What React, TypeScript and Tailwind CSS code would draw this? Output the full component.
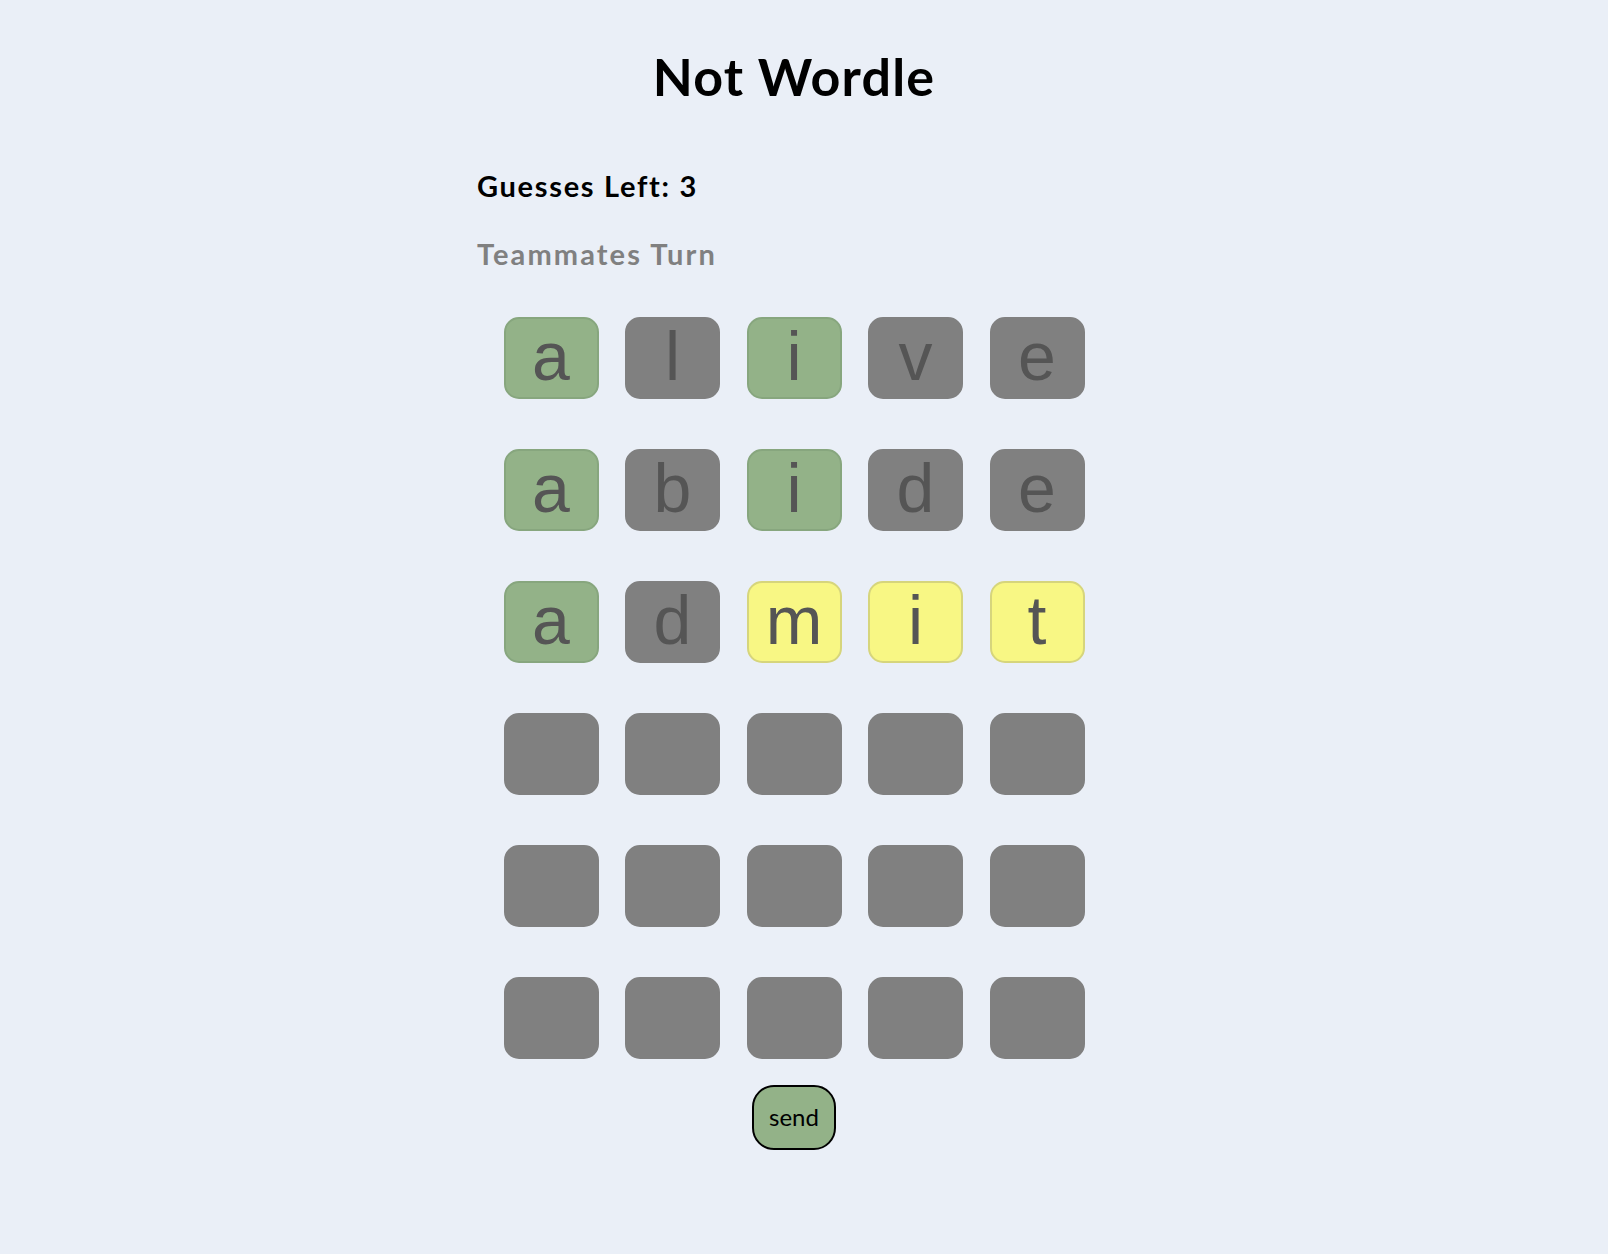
import React from "react";

type Cell = { ch: string; s: "g" | "y" | "n" };

const words: [string, string][] = [
  ["alive", "gngnn"],
  ["abide", "gngnn"],
  ["admit", "gnyyy"],
  ["     ", "nnnnn"],
  ["     ", "nnnnn"],
  ["     ", "nnnnn"],
];

const rows: Cell[][] = words.map(([w, s]) =>
  w.split("").map((ch, i) => ({ ch: ch.trim(), s: s[i] as Cell["s"] }))
);

function Tile({ c }: { c: Cell }) {
  const cls =
    c.s === "g"
      ? "bg-[#93b288] border-[#87a67e]"
      : c.s === "y"
      ? "bg-[#f8f784] border-[#d6d57c]"
      : "bg-[#808080] border-[#808080]";
  return (
    <div
      className={`w-[95px] h-[82px] rounded-[15px] border-2 flex items-center justify-center ${cls}`}
    >
      <span
        className="text-[68px] leading-none text-[#555555] pb-[4px]"
        style={{ fontFamily: '"Liberation Sans", Arial, sans-serif' }}
      >
        {c.ch}
      </span>
    </div>
  );
}

export default function App() {
  return (
    <div
      className="min-h-[1254px] w-full bg-[#eaeff7] flex justify-center pr-[20px]"
      style={{ fontFamily: 'Lato, "Open Sans", sans-serif' }}
    >
      <div className="w-[634px] flex flex-col">
        <h1 className="mt-[45px] text-center text-[52px] leading-[1.2] font-bold text-black tracking-[1.2px]">
          Not Wordle
        </h1>
        <div className="mt-[62px] text-[29px] leading-[1.2] font-bold text-black tracking-[1.7px]">
          Guesses Left: 3
        </div>
        <div className="mt-[33px] text-[29px] leading-[1.2] font-bold text-[#808080] tracking-[2.1px]">
          Teammates Turn
        </div>
        <div className="mt-[45px] flex flex-col items-center gap-[50px]">
          {rows.map((r, i) => (
            <div key={i} className="flex gap-[26.5px]">
              {r.map((c, j) => (
                <Tile key={j} c={c} />
              ))}
            </div>
          ))}
        </div>
        <div className="mt-[26px] flex justify-center">
          <button className="w-[84px] h-[65px] rounded-[22px] border-2 border-black bg-[#93b288] text-[24px] text-black">
            send
          </button>
        </div>
      </div>
    </div>
  );
}
